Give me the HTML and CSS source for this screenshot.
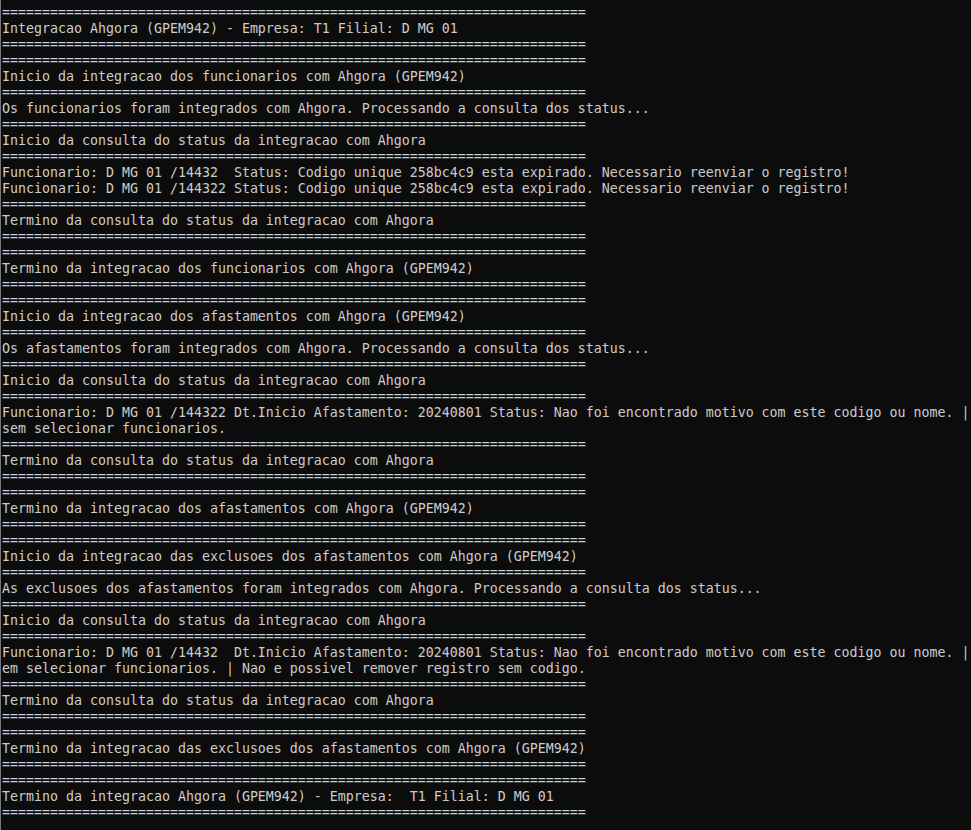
FILE: index.html
```html
<!DOCTYPE html>
<html lang="pt">
<head>
<meta charset="utf-8">
<title>Console</title>
<link rel="stylesheet" href="styles.css">
</head>
<body>
<div class="window">
<pre class="console">=========================================================================
Integracao Ahgora (GPEM942) - Empresa: T1 Filial: D MG 01
=========================================================================
=========================================================================
Inicio da integracao dos funcionarios com Ahgora (GPEM942)
=========================================================================
Os funcionarios foram integrados com Ahgora. Processando a consulta dos status...
=========================================================================
Inicio da consulta do status da integracao com Ahgora
=========================================================================
Funcionario: D MG 01 /14432  Status: Codigo unique 258bc4c9 esta expirado. Necessario reenviar o registro!
Funcionario: D MG 01 /144322 Status: Codigo unique 258bc4c9 esta expirado. Necessario reenviar o registro!
=========================================================================
Termino da consulta do status da integracao com Ahgora
=========================================================================
=========================================================================
Termino da integracao dos funcionarios com Ahgora (GPEM942)
=========================================================================
=========================================================================
Inicio da integracao dos afastamentos com Ahgora (GPEM942)
=========================================================================
Os afastamentos foram integrados com Ahgora. Processando a consulta dos status...
=========================================================================
Inicio da consulta do status da integracao com Ahgora
=========================================================================
Funcionario: D MG 01 /144322 Dt.Inicio Afastamento: 20240801 Status: Nao foi encontrado motivo com este codigo ou nome. |
sem selecionar funcionarios.
=========================================================================
Termino da consulta do status da integracao com Ahgora
=========================================================================
=========================================================================
Termino da integracao dos afastamentos com Ahgora (GPEM942)
=========================================================================
=========================================================================
Inicio da integracao das exclusoes dos afastamentos com Ahgora (GPEM942)
=========================================================================
As exclusoes dos afastamentos foram integrados com Ahgora. Processando a consulta dos status...
=========================================================================
Inicio da consulta do status da integracao com Ahgora
=========================================================================
Funcionario: D MG 01 /14432  Dt.Inicio Afastamento: 20240801 Status: Nao foi encontrado motivo com este codigo ou nome. |
em selecionar funcionarios. | Nao e possivel remover registro sem codigo.
=========================================================================
Termino da consulta do status da integracao com Ahgora
=========================================================================
=========================================================================
Termino da integracao das exclusoes dos afastamentos com Ahgora (GPEM942)
=========================================================================
=========================================================================
Termino da integracao Ahgora (GPEM942) - Empresa:  T1 Filial: D MG 01
=========================================================================</pre>
</div>
</body>
</html>
```

FILE: styles.css
```css
html, body {
  margin: 0;
  padding: 0;
  background: #0c0c0c;
  height: 100%;
  overflow: hidden;
}

.window {
  height: 830px;
  border-left: 1px solid #767676;
  padding: 5px 0 0 1px;
  box-sizing: border-box;
  overflow: hidden;
}

.console {
  margin: 0;
  font-family: "DejaVu Sans Mono", "Liberation Mono", monospace;
  font-size: 13.29px;
  line-height: 16px;
  color: #cccccc;
  white-space: pre;
}
```
